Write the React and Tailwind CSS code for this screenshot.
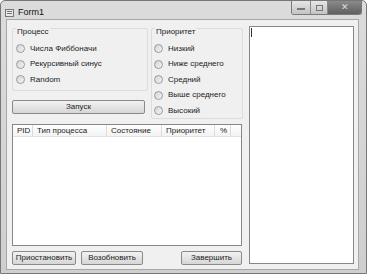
const font = { fontFamily: '"Liberation Sans", Arial, sans-serif' }

function Radio({ label }) {
  return (
    <div className="flex items-center gap-[5px] h-[15.5px]">
      <span className="w-[9px] h-[9px] rounded-full border border-[#9a9a9a] bg-gradient-to-br from-[#d4d4d4] to-[#f4f4f4] shrink-0" />
      <span className="text-[8px] text-[#222] leading-none">{label}</span>
    </div>
  )
}

function Button({ children, className = '' }) {
  return (
    <div className={`h-[14px] rounded-[2px] border border-[#8a8a8a] bg-gradient-to-b from-[#f2f2f2] to-[#d6d6d6] flex items-center justify-center text-[8px] text-[#222] leading-none ${className}`}>
      {children}
    </div>
  )
}

function Group({ title, children, className = '' }) {
  return (
    <div className={`relative border border-[#dcdcdc] rounded-[2px] ${className}`}>
      <span className="absolute -top-[1px] left-[3px] bg-[#f0f0f0] px-[1px] text-[8px] leading-none text-[#222]">{title}</span>
      {children}
    </div>
  )
}

export default function App() {
  return (
    <div className="w-[368px] h-[275px] bg-white" style={font}>
      <div className="w-[367px] h-[274px] rounded-t-[5px] border border-[#777] bg-gradient-to-b from-[#dcdcdc] to-[#cfcfcf] flex flex-col">
        {/* title bar */}
        <div className="h-[18px] flex items-start shrink-0">
          <div className="flex items-center gap-[4px] pl-[4px] pt-[5px]">
            <span className="w-[9px] h-[8px] border border-[#777] bg-[#e8e8e8] flex flex-col gap-[1px] p-[1px]">
              <span className="h-[1px] bg-[#777]" />
              <span className="h-[1px] bg-[#777]" />
            </span>
            <span className="text-[9px] text-[#111]">Form1</span>
          </div>
          <div className="ml-auto mr-[4px] flex h-[14px] rounded-b-[3px] border border-t-0 border-[#7a7a7a] overflow-hidden">
            <div className="w-[19px] bg-gradient-to-b from-[#e6e6e6] to-[#c4c4c4] border-r border-[#8a8a8a] flex items-center justify-center">
              <span className="w-[8px] h-[2px] bg-[#777] mt-[3px]" />
            </div>
            <div className="w-[17px] bg-gradient-to-b from-[#e6e6e6] to-[#c4c4c4] border-r border-[#8a8a8a] flex items-center justify-center">
              <span className="w-[7px] h-[6px] border border-[#777]" />
            </div>
            <div className="w-[33px] bg-gradient-to-b from-[#8a8a8a] to-[#606060] flex items-center justify-center text-[9px] text-[#ddd] leading-none">✕</div>
          </div>
        </div>

        {/* client area */}
        <div className="flex-1 mx-[5px] mb-[3px] mr-[7px] border border-[#a8a8a8] bg-[#f0f0f0] flex">
          <div className="w-[237px] flex flex-col pl-[5px] pt-[8px]">
            <div className="flex gap-[3px] h-[90px]">
              <div className="w-[136px] flex flex-col">
                <Group title="Процесс" className="h-[63px] pl-[3px] pt-[12px]">
                  <Radio label="Числа Фиббоначи" />
                  <Radio label="Рекурсивный синус" />
                  <Radio label="Random" />
                </Group>
                <Button className="mt-[9px] w-[133px]">Запуск</Button>
              </div>
              <Group title="Приоритет" className="w-[92px] h-[91px] pl-[2px] pt-[12px]">
                <Radio label="Низкий" />
                <Radio label="Ниже среднего" />
                <Radio label="Средний" />
                <Radio label="Выше среднего" />
                <Radio label="Высокий" />
              </Group>
            </div>

            <div className="mt-[6px] w-[230px] h-[122px] border border-[#828790] bg-white flex flex-col">
              <div className="h-[12px] flex border-b border-[#e2e2e2] bg-gradient-to-b from-white to-[#f3f3f3] text-[8px] leading-none text-[#222]">
                <div className="w-[20px] border-r border-[#dcdcdc] flex items-center pl-[4px]">PID</div>
                <div className="w-[74px] border-r border-[#dcdcdc] flex items-center pl-[4px]">Тип процесса</div>
                <div className="w-[55px] border-r border-[#dcdcdc] flex items-center pl-[4px]">Состояние</div>
                <div className="w-[53px] border-r border-[#dcdcdc] flex items-center pl-[4px]">Приоритет</div>
                <div className="w-[16px] border-r border-[#dcdcdc] flex items-center pl-[5px]">%</div>
              </div>
            </div>

            <div className="mt-[5px] flex w-[230px]">
              <Button className="w-[64px]">Приостановить</Button>
              <Button className="w-[62px] ml-[5px]">Возобновить</Button>
              <Button className="w-[61px] ml-auto">Завершить</Button>
            </div>
          </div>

          <div className="ml-[5px] mt-[6px] mb-[5px] w-[105px] border border-[#828790] bg-white">
            <div className="w-[1px] h-[9px] bg-[#333] ml-[1px] mt-[1px]" />
          </div>
        </div>
      </div>
    </div>
  )
}
